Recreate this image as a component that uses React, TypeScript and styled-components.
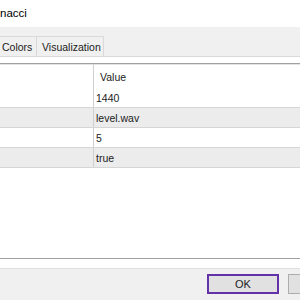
import React from 'react';
import styled, { createGlobalStyle } from 'styled-components';

const GlobalStyle = createGlobalStyle`
    html, body {
        margin: 0;
        padding: 0;
        background: #ffffff;
    }
    body {
        font-family: "Liberation Sans", Arial, sans-serif;
        color: #1b1b1b;
    }
`;

const rows = [
    { name: '', value: '1440' },
    { name: '', value: 'level.wav' },
    { name: '', value: '5' },
    { name: '', value: 'true' },
];

export default function App() {
    return (
        <>
            <GlobalStyle />
            <Window>
                <TitleBar>nacci</TitleBar>
                <TabStrip>
                    <Tab $clipped>Colors</Tab>
                    <Tab>Visualization</Tab>
                </TabStrip>
                <TabPage>
                    <Grid>
                        <HeaderRow>
                            <NameCell />
                            <HeaderValue>Value</HeaderValue>
                        </HeaderRow>
                        {rows.map((row, index) => (
                            <Row key={index} $shaded={index % 2 === 1}>
                                <NameCell>{row.name}</NameCell>
                                <ValueCell>{row.value}</ValueCell>
                            </Row>
                        ))}
                    </Grid>
                </TabPage>
                <Footer>
                    <Button $focused>OK</Button>
                    <Button aria-label="Cancel" />
                </Footer>
            </Window>
        </>
    );
}

// Styled Components
const Window = styled.div`
    width: 300px;
    height: 300px;
    overflow: hidden;
    display: flex;
    flex-direction: column;
    background: #f0f0f0;
`;

const TitleBar = styled.div`
    height: 27px;
    flex-shrink: 0;
    background: #ffffff;
    font-size: 11.5px;
    line-height: 27px;
    color: #000000;
    white-space: nowrap;
`;

const TabStrip = styled.div`
    height: 29px;
    flex-shrink: 0;
    display: flex;
    align-items: flex-end;
    box-sizing: border-box;
`;

const Tab = styled.div<{ $clipped?: boolean }>`
    height: 20px;
    box-sizing: border-box;
    display: flex;
    align-items: center;
    font-size: 10.5px;
    background: #f0f0f0;
    border: 1px solid #d9d9d9;
    border-bottom: none;
    white-space: nowrap;
    padding: ${(p) => (p.$clipped ? '0 0 0 2px' : '0 2px 0 5px')};
    width: ${(p) => (p.$clipped ? '37px' : 'auto')};
    border-left: ${(p) => (p.$clipped ? 'none' : '0')};
    & + & {
        border-left: none;
    }
`;

const TabPage = styled.div`
    flex: 1;
    display: flex;
    flex-direction: column;
    background: #ffffff;
    border-top: 1px solid #d9d9d9;
    padding: 6px 0 9px;
`;

const Grid = styled.div`
    flex: 1;
    display: flex;
    flex-direction: column;
    border-top: 1px solid #a0a0a0;
    border-bottom: 1px solid #a0a0a0;
    box-shadow: inset 0 1px 0 #e3e3e3;
`;

const HeaderRow = styled.div`
    display: grid;
    grid-template-columns: 94px 1fr;
    height: 24px;
    font-size: 10.5px;
`;

const Row = styled.div<{ $shaded?: boolean }>`
    display: grid;
    grid-template-columns: 94px 1fr;
    height: 20px;
    box-sizing: border-box;
    border-bottom: 1px solid #d6d6d6;
    background: ${(p) => (p.$shaded ? '#ececec' : '#ffffff')};
    font-size: 10.5px;
`;

const NameCell = styled.div`
    border-right: 1px solid #d0d0d0;
`;

const HeaderValue = styled.div`
    display: flex;
    align-items: center;
    padding: 2px 0 0 6px;
`;

const ValueCell = styled.div`
    display: flex;
    align-items: center;
    padding-left: 2px;
    white-space: nowrap;
`;

const Footer = styled.div`
    height: 32px;
    flex-shrink: 0;
    box-sizing: border-box;
    border-top: 1px solid #dfdfdf;
    display: flex;
    justify-content: flex-end;
    align-items: flex-start;
    padding-top: 5px;
    gap: 9px;
    margin-right: -60px;
`;

const Button = styled.button<{ $focused?: boolean }>`
    width: 72px;
    height: 20px;
    flex-shrink: 0;
    box-sizing: border-box;
    margin: 0;
    padding: 0;
    font-family: "Liberation Sans", Arial, sans-serif;
    font-size: 11px;
    color: #1b1b1b;
    background: #e1e1e1;
    border: ${(p) => (p.$focused ? '2px solid #6331a8' : '1px solid #adadad')};
`;
